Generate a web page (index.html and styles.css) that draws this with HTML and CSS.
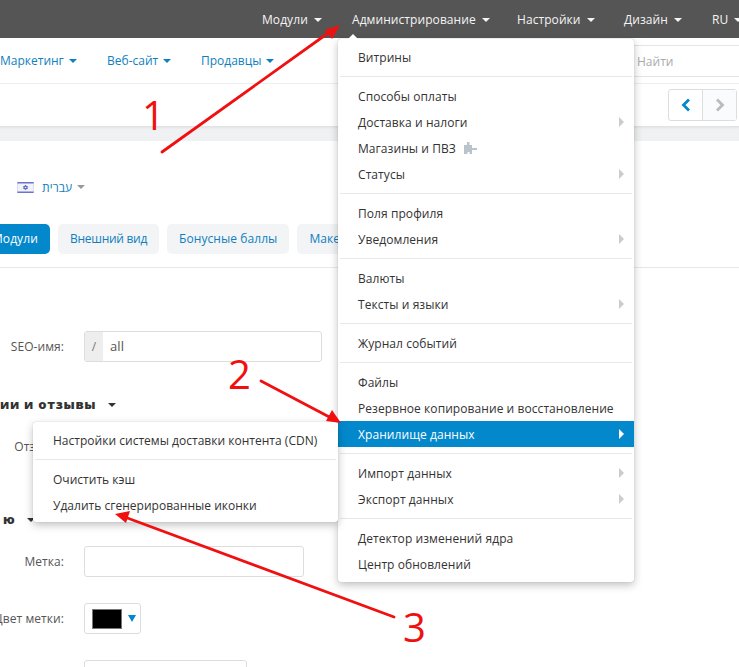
FILE: index.html
```html
<!DOCTYPE html>
<html lang="ru">
<head>
<meta charset="utf-8">
<title>Администрирование</title>
<link rel="stylesheet" href="styles.css">
</head>
<body>
<div class="page">
  <header class="topbar">
    <a class="top-link top-modules">Модули<i class="caret"></i></a>
    <a class="top-link top-admin">Администрирование<i class="caret"></i></a>
    <a class="top-link top-settings">Настройки<i class="caret"></i></a>
    <a class="top-link top-design">Дизайн<i class="caret"></i></a>
    <a class="top-link top-lang">RU<i class="caret"></i></a>
  </header>
  <nav class="navbar">
    <a class="nav-link nav-marketing">Маркетинг<i class="caret"></i></a>
    <a class="nav-link nav-site">Веб-сайт<i class="caret"></i></a>
    <a class="nav-link">Продавцы<i class="caret"></i></a>
    <div class="search">Найти</div>
  </nav>
  <div class="toolbar">
    <div class="pager">
      <span class="pager-btn"><svg width="10" height="14" viewBox="0 0 10 14"><path d="M8 1.500 2.500 7 8 12.500" fill="none" stroke="#0388cc" stroke-width="2.800"/></svg></span>
      <span class="pager-btn pager-off"><svg width="10" height="14" viewBox="0 0 10 14"><path d="M2 1.500 7.500 7 2 12.500" fill="none" stroke="#bbb" stroke-width="2.800"/></svg></span>
    </div>
  </div>
  <div class="band"></div>
  <main class="content">
    <div class="lang">
      <svg class="flag" width="17" height="11" viewBox="0 0 17 11"><rect width="17" height="11" fill="#f2f3fa"/><path d="M0 .7h17M0 10.300h17" stroke="#6a74c8" stroke-width="1.400"/><path d="M0 0v11M17 0v11" stroke="#c5c8e0"/><path d="M8.500 3 10.500 6.500h-4zM8.500 8 6.500 4.500h4z" fill="none" stroke="#5560c0" stroke-width=".8"/></svg>
      <a class="lang-name" dir="rtl">עברית</a><i class="caret caret-grey"></i>
    </div>
    <div class="tabs">
      <a class="tab tab-active">Модули</a>
      <a class="tab tab-look">Внешний вид</a>
      <a class="tab">Бонусные баллы</a>
      <a class="tab">Макеты</a>
    </div>
    <section class="form">
      <div class="row row-seo">
        <label class="label">SEO-имя:</label>
        <div class="input-group"><span class="addon">/</span><span class="value">all</span></div>
      </div>
      <h3 class="heading heading-reviews">ии и отзывы<i class="caret caret-dark"></i></h3>
      <div class="row row-reviews"><label class="label">Отзывы:</label></div>
      <h3 class="heading heading-menu">ю<i class="caret caret-dark"></i></h3>
      <div class="row row-mark">
        <label class="label">Метка:</label>
        <div class="input input-mark"></div>
      </div>
      <div class="row row-color">
        <label class="label">Цвет метки:</label>
        <div class="color-btn"><span class="swatch"></span><i class="caret caret-blue"></i></div>
      </div>
      <div class="row row-last">
        <div class="input input-last"></div>
      </div>
    </section>
  </main>

  <div class="menu menu-admin">
    <a class="item">Витрины</a>
    <hr class="sep">
    <a class="item">Способы оплаты</a>
    <a class="item has-sub">Доставка и налоги</a>
    <a class="item">Магазины и ПВЗ<svg class="puzzle" width="13" height="12" viewBox="0 0 13 12"><path d="M0 3h3V0h2.500v3H8v3h5v2H8v4H5.500v-2h-2v2H0z" fill="#b9c3cc"/></svg></a>
    <a class="item has-sub">Статусы</a>
    <hr class="sep">
    <a class="item">Поля профиля</a>
    <a class="item has-sub">Уведомления</a>
    <hr class="sep">
    <a class="item">Валюты</a>
    <a class="item has-sub">Тексты и языки</a>
    <hr class="sep">
    <a class="item">Журнал событий</a>
    <hr class="sep">
    <a class="item">Файлы</a>
    <a class="item">Резервное копирование и восстановление</a>
    <a class="item has-sub item-active">Хранилище данных</a>
    <hr class="sep">
    <a class="item has-sub">Импорт данных</a>
    <a class="item has-sub">Экспорт данных</a>
    <hr class="sep">
    <a class="item">Детектор изменений ядра</a>
    <a class="item">Центр обновлений</a>
  </div>
  <div class="menu menu-storage">
    <a class="item">Настройки системы доставки контента (CDN)</a>
    <hr class="sep">
    <a class="item">Очистить кэш</a>
    <a class="item">Удалить сгенерированные иконки</a>
  </div>
  <i class="notch"></i>

  <svg class="notes" width="739" height="667" viewBox="0 0 739 667">
    <g fill="none" stroke="#f01010" stroke-width="2.800" stroke-linecap="round">
      <path d="M162 152 331 31"/>
      <path d="M261 381 335 420"/>
      <path d="M394 617 122 516"/>
    </g>
    <g fill="#f01010">
      <path d="M340 25 325 30 332 39z"/>
      <path d="M341 423 332 410 326 421z"/>
      <path d="M115 514 130 511 126 523z"/>
    </g>
  </svg>
  <span class="num num-1">1</span>
  <span class="num num-2">2</span>
  <span class="num num-3">3</span>
</div>
</body>
</html>
```
FILE: styles.css
```css
* { box-sizing: border-box; }
html, body { margin: 0; padding: 0; background: #fff; }
.page {
  position: relative;
  width: 739px;
  height: 667px;
  overflow: hidden;
  font-family: "Open Sans", "Noto Sans", sans-serif;
  font-size: 12px;
  letter-spacing: .07px;
  color: #333;
}
.caret {
  display: inline-block;
  width: 0;
  height: 0;
  margin-left: 6px;
  border-left: 4px solid transparent;
  border-right: 4px solid transparent;
  border-top: 4px solid currentColor;
  vertical-align: 2px;
}
.topbar {
  display: flex;
  height: 38px;
  padding-left: 262px;
  align-items: center;
  background: #555;
  color: #fff;
  white-space: nowrap;
}
.top-link { flex: none; color: #f4f4f4; }
.top-modules { width: 90px; }
.top-admin { width: 165px; }
.top-settings { width: 107px; }
.top-design { width: 88px; }
.navbar {
  display: flex;
  height: 46px;
  align-items: center;
  border-bottom: 1px solid #eee;
  position: relative;
  letter-spacing: 0;
}
.nav-link { flex: none; color: #0f7fbe; font-size: 12px; white-space: nowrap; }
.nav-link .caret { margin-left: 5px; }
.nav-marketing { width: 107px; }
.nav-site { width: 94px; }
.search {
  margin-left: auto;
  width: 140px;
  height: 32px;
  padding: 7px 0 0 38px;
  border-top: 1px solid #e4e4e4;
  border-bottom: 1px solid #e4e4e4;
  color: #aaa;
  align-self: flex-start;
  margin-top: 7px;
}
.toolbar {
  display: flex;
  justify-content: flex-end;
  height: 42px;
  padding: 5px 2px 0 0;
}
.pager {
  display: flex;
  width: 69px;
  height: 32px;
  border: 1px solid #ddd;
  border-radius: 3px;
}
.pager-btn {
  display: flex;
  flex: 1;
  align-items: center;
  justify-content: center;
}
.pager-off { border-left: 1px solid #ddd; background: #fafbfc; }
.band {
  height: 15px;
  background: #eff1f2;
  box-shadow: inset 0 3px 3px -2px #d8dadc;
}
.lang {
  display: flex;
  align-items: center;
  height: 22px;
  margin-top: 35px;
  padding-left: 17px;
}
.lang-name { margin-left: 8px; color: #0f7fbe; font-size: 12px; }
.caret-grey { margin-left: 5px; color: #999; }
.tabs {
  display: flex;
  gap: 8px;
  height: 44px;
  margin-top: 26px;
  margin-left: -20px;
  border-bottom: 1px solid #e8e8e8;
}
.tab {
  flex: none;
  height: 30px;
  padding: 0 12px;
  line-height: 30px;
  border-radius: 5px;
  background: #f3f4f5;
  color: #0f7fbe;
  white-space: nowrap;
}
.tab-active { width: 70px; background: #0388cc; color: #fff; }
.tab-look { letter-spacing: -.28px; }
.row { display: flex; align-items: center; }
.label {
  display: flex;
  justify-content: flex-end;
  width: 64px;
  margin-right: 20px;
  color: #555;
  white-space: nowrap;
}
.row-seo { margin-top: 63px; height: 31px; }
.input-group {
  display: flex;
  width: 238px;
  height: 31px;
  border: 1px solid #ddd;
  border-radius: 3px;
  overflow: hidden;
}
.addon {
  width: 18px;
  background: #eee;
  color: #777;
  text-align: center;
  line-height: 29px;
}
.value { padding-left: 7px; font-size: 13px; line-height: 29px; color: #555; }
.heading {
  margin: 0;
  color: #333;
  font-size: 13px;
  font-weight: 800;
  letter-spacing: .7px;
  white-space: nowrap;
}
.caret-dark { margin-left: 12px; color: #333; }
.heading-reviews { margin-top: 32px; height: 20px; line-height: 20px; }
.row-reviews { margin-top: 22px; height: 20px; }
.heading-menu { margin-top: 53px; height: 20px; line-height: 20px; padding-left: 3px; }
.row-mark { margin-top: 17px; height: 31px; }
.input { height: 31px; border: 1px solid #ddd; border-radius: 3px; }
.input-mark { width: 220px; }
.row-color { margin-top: 26px; height: 31px; }
.color-btn {
  display: flex;
  align-items: center;
  width: 57px;
  height: 31px;
  padding-left: 7px;
  border: 1px solid #ddd;
  border-radius: 3px;
}
.swatch { width: 30px; height: 20px; background: #000; border: 1px solid #777; }
.caret-blue {
  margin-left: 6px;
  border-left-width: 4px;
  border-right-width: 4px;
  border-top-width: 7px;
  color: #0388cc;
}
.row-last { margin-top: 26px; padding-left: 84px; }
.input-last { width: 163px; }
.menu {
  position: absolute;
  padding: 5px 0;
  background: #fff;
  border-radius: 3px;
  box-shadow: 0 3px 8px rgba(0, 0, 0, .25), 0 0 1px rgba(0, 0, 0, .25);
}
.menu-admin { left: 338px; top: 39px; width: 296px; height: 543px; }
.menu-storage { left: 33px; top: 422px; width: 305px; height: 100px; letter-spacing: .02px; }
.item {
  display: flex;
  align-items: center;
  position: relative;
  height: 26px;
  padding-left: 20px;
  color: #333;
  font-size: 12px;
  white-space: nowrap;
}
.has-sub::after {
  content: "";
  position: absolute;
  right: 10px;
  top: 8px;
  border-top: 5px solid transparent;
  border-bottom: 5px solid transparent;
  border-left: 5px solid #ccc;
}
.item-active { background: #0388cc; color: #fff; }
.item-active::after { border-left-color: #fff; }
.sep { height: 1px; margin: 6px 2px; border: 0; background: #e8e8e8; }
.puzzle { margin-left: 8px; }
.notch {
  position: absolute;
  left: 348px;
  top: 34px;
  border-left: 5px solid transparent;
  border-right: 5px solid transparent;
  border-bottom: 5px solid #fff;
}
.notes { position: absolute; left: 0; top: 0; pointer-events: none; }
.num {
  position: absolute;
  color: #f01010;
  font-size: 40px;
  line-height: 48px;
}
.num-1 { left: 142px; top: 91px; }
.num-2 { left: 228px; top: 350px; }
.num-3 { left: 403px; top: 603px; }
```
